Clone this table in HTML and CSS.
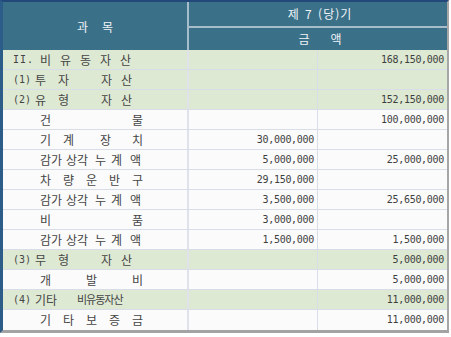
FILE: index.html
```html
<!DOCTYPE html>
<html lang="ko">
<head>
<meta charset="utf-8">
<title>비유동자산</title>
<link rel="stylesheet" href="styles.css">
</head>
<body>
<div class="frame">
  <div class="head">
    <div class="h-subject"><span>과</span><span>목</span></div>
    <div class="h-period">제 7 (당)기</div>
    <div class="h-amount"><span>금</span><span>액</span></div>
  </div>

  <div class="row green">
    <div class="label"><span class="pre roman">II.</span><span class="g g-roman"><span>비</span><span>유</span><span>동</span><span>자</span><span>산</span></span></div>
    <div class="amt"></div><div class="amt">168,150,000</div>
  </div>
  <div class="row green">
    <div class="label"><span class="pre">(1)</span><span class="g g-top"><span>투</span><span>자</span><span></span><span>자</span><span>산</span></span></div>
    <div class="amt"></div><div class="amt"></div>
  </div>
  <div class="row green">
    <div class="label"><span class="pre">(2)</span><span class="g g-top"><span>유</span><span>형</span><span></span><span>자</span><span>산</span></span></div>
    <div class="amt"></div><div class="amt">152,150,000</div>
  </div>
  <div class="row">
    <div class="label indent"><span class="g g-sub"><span>건</span><span></span><span></span><span></span><span>물</span></span></div>
    <div class="amt"></div><div class="amt">100,000,000</div>
  </div>
  <div class="row">
    <div class="label indent"><span class="g g-machine"><span>기</span><span>계</span><span>장</span><span>치</span></span></div>
    <div class="amt">30,000,000</div><div class="amt"></div>
  </div>
  <div class="row">
    <div class="label indent"><span class="g g-dep"><span>감가</span><span>상각</span><span>누</span><span>계</span><span>액</span></span></div>
    <div class="amt">5,000,000</div><div class="amt">25,000,000</div>
  </div>
  <div class="row">
    <div class="label indent"><span class="g g-sub"><span>차</span><span>량</span><span>운</span><span>반</span><span>구</span></span></div>
    <div class="amt">29,150,000</div><div class="amt"></div>
  </div>
  <div class="row">
    <div class="label indent"><span class="g g-dep"><span>감가</span><span>상각</span><span>누</span><span>계</span><span>액</span></span></div>
    <div class="amt">3,500,000</div><div class="amt">25,650,000</div>
  </div>
  <div class="row">
    <div class="label indent"><span class="g g-sub"><span>비</span><span></span><span></span><span></span><span>품</span></span></div>
    <div class="amt">3,000,000</div><div class="amt"></div>
  </div>
  <div class="row">
    <div class="label indent"><span class="g g-dep"><span>감가</span><span>상각</span><span>누</span><span>계</span><span>액</span></span></div>
    <div class="amt">1,500,000</div><div class="amt">1,500,000</div>
  </div>
  <div class="row green">
    <div class="label"><span class="pre">(3)</span><span class="g g-top"><span>무</span><span>형</span><span></span><span>자</span><span>산</span></span></div>
    <div class="amt"></div><div class="amt">5,000,000</div>
  </div>
  <div class="row">
    <div class="label indent"><span class="g g-sub"><span>개</span><span></span><span>발</span><span></span><span>비</span></span></div>
    <div class="amt"></div><div class="amt">5,000,000</div>
  </div>
  <div class="row green">
    <div class="label"><span class="pre">(4)</span><span class="g g-other"><span>기타</span><span class="tight">비유동자산</span></span></div>
    <div class="amt"></div><div class="amt">11,000,000</div>
  </div>
  <div class="row last">
    <div class="label indent"><span class="g g-sub"><span>기</span><span>타</span><span>보</span><span>증</span><span>금</span></span></div>
    <div class="amt"></div><div class="amt">11,000,000</div>
  </div>
</div>
</body>
</html>
```

FILE: styles.css
```css
* { box-sizing: border-box; }

html, body {
  margin: 0;
  padding: 0;
  background: #ffffff;
}

body {
  font-family: "Noto Sans CJK KR", "Noto Sans", sans-serif;
  font-size: 12px;
  color: #454545;
}

.frame {
  width: 449px;
  border-top: 2px solid #22497a;
  border-left: 3px solid #2c5c88;
  border-right: 2px solid #a6a6a6;
  border-bottom: 3px solid #a3a3a3;
}

/* header */
.head {
  display: grid;
  grid-template-columns: 186px 258px;
  grid-template-rows: 26px 22px;
  background: #3b7089;
  color: #eef3f6;
  line-height: 1;
}

.h-subject {
  grid-row: 1 / 3;
  border-right: 2px solid #a7bdcc;
  display: flex;
  align-items: center;
  justify-content: center;
  gap: 14px;
  padding-top: 1px;
}

.h-period {
  border-bottom: 2px solid #a7bdcc;
  display: flex;
  align-items: center;
  justify-content: center;
  padding-left: 4px;
  letter-spacing: 1px;
  word-spacing: 1px;
}

.h-amount {
  display: flex;
  align-items: center;
  justify-content: center;
  gap: 21px;
  padding-left: 4px;
}

/* body rows */
.row {
  display: grid;
  grid-template-columns: 186px 129px 129px;
  height: 20px;
  background: #fbfbfb;
  border-bottom: 1px solid #d9dde7;
  line-height: 1;
}

.row.green {
  background: #dde9d3;
}

.row.last {
  border-bottom: none;
}

.label {
  display: flex;
  align-items: center;
  padding-left: 10px;
  border-right: 2px solid #dfe2ea;
  white-space: nowrap;
}

.label.indent {
  padding-left: 37px;
}

.pre {
  width: 22px;
  font-family: "DejaVu Sans Mono", monospace;
  font-size: 10px;
  color: #454545;
}

.pre.roman {
  width: 27px;
  letter-spacing: 1px;
}

.g {
  display: grid;
}

.g-roman { grid-template-columns: 20px 20px 20px 20px 12px; }
.g-top { grid-template-columns: 23px 22px 21px 20px 12px; }
.g-sub { grid-template-columns: 23px 23px 23px 23px 12px; }
.g-machine { grid-template-columns: 23px 37px 32px 12px; }
.g-dep { grid-template-columns: 26px 29px 16px 19px 12px; }
.g-other { grid-template-columns: 42px auto; }

.tight {
  letter-spacing: -1px;
  font-size: 11px;
}

.amt {
  display: flex;
  align-items: center;
  justify-content: flex-end;
  padding-right: 3px;
  font-family: "DejaVu Sans Mono", monospace;
  font-size: 10px;
  letter-spacing: -0.3px;
  color: #3e3e3e;
}

.row .amt:nth-child(2) {
  border-right: 1px solid #d9dde7;
}
```
